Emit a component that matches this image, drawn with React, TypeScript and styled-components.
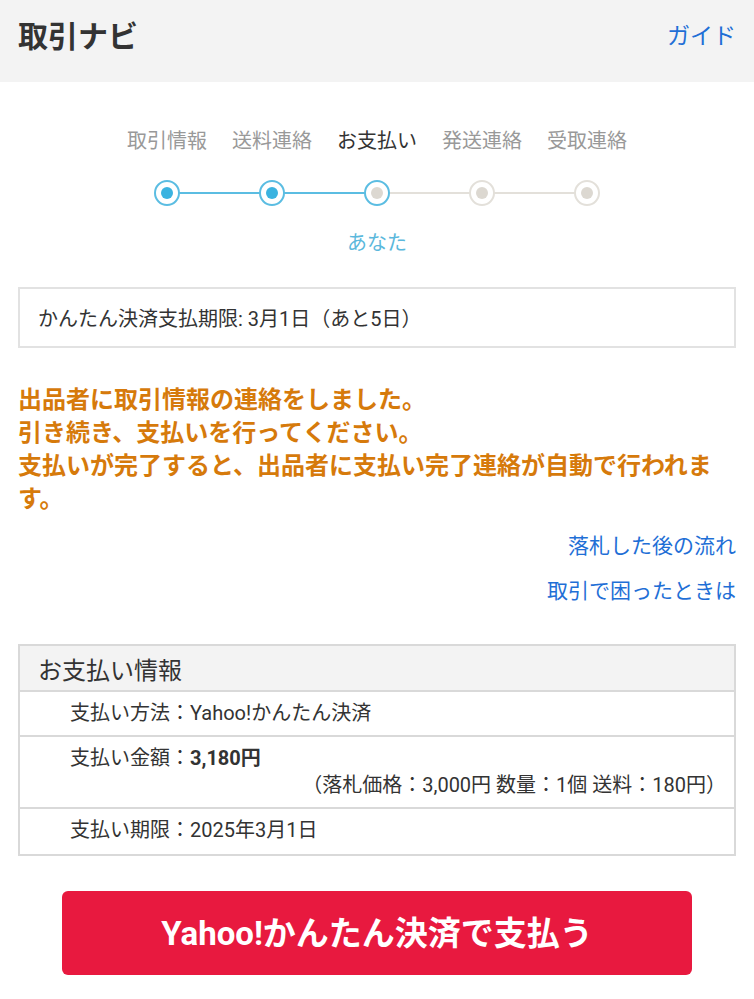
import React from 'react'
import styled, { createGlobalStyle } from 'styled-components'

const GlobalStyle = createGlobalStyle`
  html, body {
    margin: 0;
    padding: 0;
    background: #fff;
  }
  body {
    font-family: Roboto, "Noto Sans CJK JP", sans-serif;
    color: #333;
  }
  * {
    box-sizing: border-box;
  }
`

const Header = styled.header`
  height: 82px;
  padding: 17px 18px 0;
  background: #f3f3f3;
  display: flex;
  justify-content: space-between;
  align-items: flex-start;

  > h1 {
    margin: 0;
    font-size: 30px;
    line-height: 40px;
    font-weight: 700;
    color: #333;
  }

  > a {
    font-size: 23px;
    line-height: 40px;
    color: #1f6fd6;
    text-decoration: none;
  }
`

const Main = styled.main`
  padding: 0 18px;
`

const Steps = styled.ol`
  margin: 44px auto 0;
  padding: 0;
  list-style: none;
  display: grid;
  grid-template-columns: repeat(5, 105px);
  justify-content: center;
`

const Step = styled.li<{ $active: boolean; $current: boolean; $leftOn: boolean; $rightOn: boolean; $first: boolean; $last: boolean }>`
  display: flex;
  flex-direction: column;
  align-items: center;

  > .step_label {
    font-size: 20px;
    line-height: 30px;
    white-space: nowrap;
    color: ${(p) => (p.$current ? '#333' : '#999')};
  }

  > .step_track {
    position: relative;
    width: 100%;
    height: 26px;
    margin-top: 24px;
    display: flex;
    justify-content: center;

    &::before,
    &::after {
      content: '';
      position: absolute;
      top: 12px;
      height: 2px;
      width: 50%;
    }

    &::before {
      left: 0;
      background: ${(p) => (p.$first ? 'transparent' : p.$leftOn ? '#5bbde2' : '#e3e0da')};
    }

    &::after {
      right: 0;
      background: ${(p) => (p.$last ? 'transparent' : p.$rightOn ? '#5bbde2' : '#e3e0da')};
    }
  }

  .step_dot {
    position: relative;
    z-index: 1;
    width: 26px;
    height: 26px;
    border-radius: 50%;
    border: 2px solid ${(p) => (p.$active || p.$current ? '#5bbde2' : '#e3e0da')};
    background: #fff;
    display: flex;
    align-items: center;
    justify-content: center;

    &::after {
      content: '';
      width: 12px;
      height: 12px;
      border-radius: 50%;
      background: ${(p) => (p.$active ? '#3bb3e0' : '#dcd8d1')};
    }
  }

  > .step_owner {
    margin-top: 22px;
    font-size: 20px;
    line-height: 30px;
    color: #5bb8dc;
    white-space: nowrap;
  }
`

const DeadlineBox = styled.div`
  margin-top: 29px;
  height: 61px;
  padding-left: 18px;
  border: 2px solid #e2e2e2;
  display: flex;
  align-items: center;
  font-size: 20px;
  color: #333;
`

const Notice = styled.p`
  margin: 36px 0 0;
  font-size: 24px;
  line-height: 33px;
  font-weight: 700;
  color: #d67a0b;
`

const HelpLinks = styled.div`
  margin-top: 8px;
  display: flex;
  flex-direction: column;
  align-items: flex-end;

  > a {
    font-size: 21px;
    line-height: 45px;
    color: #1f6fd6;
    text-decoration: none;
  }
`

const InfoTable = styled.section`
  margin-top: 30px;
  border: 2px solid #d9d9d9;

  > h2 {
    margin: 0;
    height: 46px;
    padding-left: 18px;
    display: flex;
    align-items: center;
    background: #f3f3f3;
    border-bottom: 2px solid #d9d9d9;
    font-size: 24px;
    font-weight: 400;
    color: #333;
  }
`

const InfoRow = styled.div<{ $last?: boolean }>`
  padding: 7px 8px 8px 50px;
  min-height: 45px;
  border-bottom: ${(p) => (p.$last ? 'none' : '2px solid #d9d9d9')};
  font-size: 20px;
  line-height: 28px;
  color: #333;

  > b {
    font-weight: 700;
  }

  > .row_note {
    display: block;
    text-align: right;
    line-height: 27px;
  }
`

const PayButton = styled.button`
  display: block;
  margin: 35px auto 0;
  width: 630px;
  height: 84px;
  padding: 0 0 4px;
  border: none;
  border-radius: 6px;
  background: #e8193f;
  color: #fff;
  font-family: Roboto, "Noto Sans CJK JP", sans-serif;
  font-size: 33px;
  font-weight: 700;
  cursor: pointer;
`

const steps = ['取引情報', '送料連絡', 'お支払い', '発送連絡', '受取連絡']
const current = 2

const App: React.FC = () => (
  <>
    <GlobalStyle />
    <Header>
      <h1>取引ナビ</h1>
      <a href="#">ガイド</a>
    </Header>
    <Main>
      <Steps>
        {steps.map((label, i) => (
          <Step
            key={label}
            $active={i < current}
            $current={i === current}
            $leftOn={i <= current}
            $rightOn={i < current}
            $first={i === 0}
            $last={i === steps.length - 1}
          >
            <span className="step_label">{label}</span>
            <div className="step_track">
              <span className="step_dot" />
            </div>
            {i === current && <span className="step_owner">あなた</span>}
          </Step>
        ))}
      </Steps>
      <DeadlineBox>かんたん決済支払期限: 3月1日（あと5日）</DeadlineBox>
      <Notice>
        出品者に取引情報の連絡をしました。
        <br />
        引き続き、支払いを行ってください。
        <br />
        支払いが完了すると、出品者に支払い完了連絡が自動で行われます。
      </Notice>
      <HelpLinks>
        <a href="#">落札した後の流れ</a>
        <a href="#">取引で困ったときは</a>
      </HelpLinks>
      <InfoTable>
        <h2>お支払い情報</h2>
        <InfoRow>支払い方法：Yahoo!かんたん決済</InfoRow>
        <InfoRow>
          支払い金額：<b>3,180円</b>
          <span className="row_note">（落札価格：3,000円 数量：1個 送料：180円）</span>
        </InfoRow>
        <InfoRow $last>支払い期限：2025年3月1日</InfoRow>
      </InfoTable>
      <PayButton type="button">Yahoo!かんたん決済で支払う</PayButton>
    </Main>
  </>
)

export default App
